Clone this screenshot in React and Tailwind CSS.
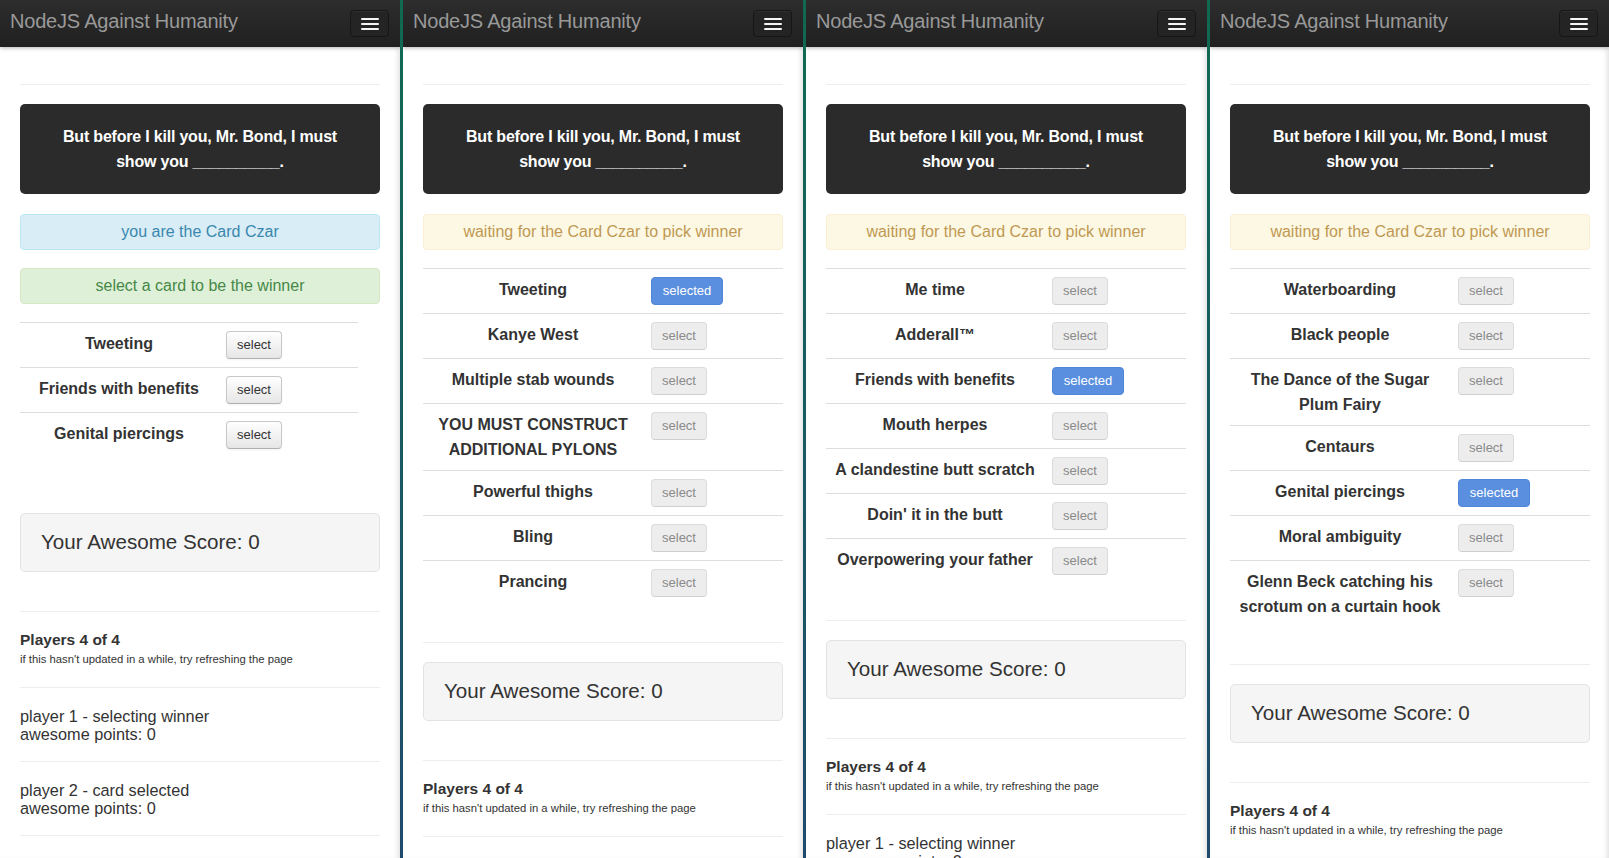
import React from 'react';

const BLACK_CARD = 'But before I kill you, Mr. Bond, I must show you __________.';

const players = [
  { name: 'player 1', status: 'selecting winner', points: 0 },
  { name: 'player 2', status: 'card selected', points: 0 },
  { name: 'player 3', status: 'card selected', points: 0 },
  { name: 'player 4', status: 'card selected', points: 0 },
];

const panels = [
  {
    width: 'w-[400px]',
    czar: true,
    tableClass: 'w-[338px] grid-cols-[198px_1fr]',
    cards: [
      { text: 'Tweeting' },
      { text: 'Friends with benefits' },
      { text: 'Genital piercings' },
    ],
  },
  {
    width: 'w-[400px]',
    czar: false,
    tableClass: 'w-[360px] grid-cols-[220px_1fr]',
    cards: [
      { text: 'Tweeting', selected: true },
      { text: 'Kanye West' },
      { text: 'Multiple stab wounds' },
      { text: 'YOU MUST CONSTRUCT ADDITIONAL PYLONS' },
      { text: 'Powerful thighs' },
      { text: 'Bling' },
      { text: 'Prancing' },
    ],
  },
  {
    width: 'w-[401px]',
    czar: false,
    tableClass: 'w-[360px] grid-cols-[218px_1fr]',
    cards: [
      { text: 'Me time' },
      { text: 'Adderall™' },
      { text: 'Friends with benefits', selected: true },
      { text: 'Mouth herpes' },
      { text: 'A clandestine butt scratch' },
      { text: "Doin' it in the butt" },
      { text: 'Overpowering your father' },
    ],
  },
  {
    width: 'flex-1',
    czar: false,
    tableClass: 'w-[360px] grid-cols-[220px_1fr]',
    cards: [
      { text: 'Waterboarding' },
      { text: 'Black people' },
      { text: 'The Dance of the Sugar Plum Fairy' },
      { text: 'Centaurs' },
      { text: 'Genital piercings', selected: true },
      { text: 'Moral ambiguity' },
      { text: 'Glenn Beck catching his scrotum on a curtain hook' },
    ],
  },
];

function Navbar() {
  return (
    <div className="relative z-10 flex h-[47px] items-center justify-between bg-gradient-to-b from-[#2d2d2d] to-[#202020] shadow-[0_1px_4px_rgba(0,0,0,0.3)]">
      <span className="mb-[6px] pl-[10px] text-[20px] leading-[24px] text-[#999999] tracking-[-0.2px]">
        NodeJS Against Humanity
      </span>
      <button className="mr-[11px] flex h-[27px] w-[39px] flex-col items-center justify-center gap-[3px] rounded-[4px] border border-[#161616] bg-[#242424] shadow-[inset_0_1px_0_rgba(255,255,255,0.06)]">
        <span className="block h-[2px] w-[18px] rounded-[1px] bg-[#f5f5f5]" />
        <span className="block h-[2px] w-[18px] rounded-[1px] bg-[#f5f5f5]" />
        <span className="block h-[2px] w-[18px] rounded-[1px] bg-[#f5f5f5]" />
      </button>
    </div>
  );
}

function SelectButton({ czar, selected }) {
  if (selected) {
    return (
      <button className="h-[28px] w-[72px] rounded-[4px] border border-[#5086d8] bg-[#5a8fdf] text-[13px] text-white">
        selected
      </button>
    );
  }
  if (czar) {
    return (
      <button className="h-[28px] w-[56px] rounded-[4px] border border-[#c8c8c8] border-b-[#b0b0b0] bg-gradient-to-b from-white to-[#e6e6e6] text-[13px] text-[#333333] shadow-[inset_0_1px_0_rgba(255,255,255,0.2),0_1px_2px_rgba(0,0,0,0.05)]">
        select
      </button>
    );
  }
  return (
    <button className="h-[28px] w-[56px] rounded-[4px] border border-[#dcdcdc] border-b-[#cfcfcf] bg-[#ededed] text-[13px] text-[#8a8a8a]">
      select
    </button>
  );
}

function Alert({ tone, children }) {
  const tones = {
    info: 'bg-[#d9edf7] border-[#bce8f1] text-[#3a87ad]',
    success: 'bg-[#dff0d8] border-[#d6e9c6] text-[#468847]',
    warning: 'bg-[#fcf8e3] border-[#fbeed5] text-[#c09853]',
  };
  return (
    <div className={`mt-5 h-[36px] rounded-[4px] border text-center text-[16px] leading-[34px] ${tones[tone]}`}>
      {children}
    </div>
  );
}

function Panel({ panel }) {
  return (
    <div className={`${panel.width} h-full shrink-0 overflow-hidden bg-white shadow-[inset_-5px_0_5px_-3px_rgba(0,0,0,0.12)]`}>
      <Navbar />
      <div className="ml-5 w-[360px] pt-[37px] text-[#333333]">
        <div className="h-px bg-[#eeeeee]" />

        {/* black card */}
        <div className="mt-[19px] h-[90px] rounded-[5px] bg-[#2b2b2b] px-8 py-5 text-center text-[16px] font-bold leading-[25px] tracking-[-0.2px] text-white">
          {BLACK_CARD}
        </div>

        {panel.czar ? (
          <>
            <Alert tone="info">you are the Card Czar</Alert>
            <div className="-mt-[2px]">
              <Alert tone="success">select a card to be the winner</Alert>
            </div>
          </>
        ) : (
          <Alert tone="warning">waiting for the Card Czar to pick winner</Alert>
        )}

        {/* white cards */}
        <div className={`mt-[18px] grid ${panel.tableClass}`}>
          {panel.cards.map((card, i) => (
            <React.Fragment key={i}>
              <div className="border-t border-[#dddddd] px-1 py-2 text-center text-[16px] font-bold leading-[25px]">
                {card.text}
              </div>
              <div className="border-t border-[#dddddd] py-2 pl-2">
                <SelectButton czar={panel.czar} selected={card.selected} />
              </div>
            </React.Fragment>
          ))}
        </div>

        {panel.czar ? (
          <div className="mt-[56px]" />
        ) : (
          <>
            <div className="mt-[37px] h-px bg-[#eeeeee]" />
            <div className="mt-[19px]" />
          </>
        )}

        {/* score */}
        <div className="flex h-[59px] items-center rounded-[5px] border border-[#e3e3e3] bg-[#f5f5f5] pl-5 text-[20.6px]">
          Your Awesome Score: 0
        </div>

        <div className="mt-[39px] h-px bg-[#eeeeee]" />
        <div className="pt-[18px] pb-[19px]">
          <div className="text-[15.5px] font-bold leading-[20px]">Players 4 of 4</div>
          <div className="text-[11.3px] leading-[18px]">if this hasn't updated in a while, try refreshing the page</div>
        </div>
        <div className="h-px bg-[#eeeeee]" />
        {players.map((p) => (
          <div key={p.name}>
            <div className="pt-[19px] pb-[18px] text-[16.3px] leading-[18px]">
              <div>
                {p.name} - {p.status}
              </div>
              <div>awesome points: {p.points}</div>
            </div>
            <div className="h-px bg-[#eeeeee]" />
          </div>
        ))}
      </div>
    </div>
  );
}

function Separator() {
  return <div className="h-full w-[3px] shrink-0 bg-gradient-to-b from-[#0f6a50] via-[#185a62] to-[#1f4a6c]" />;
}

export default function App() {
  return (
    <div className="flex h-[858px] w-[1609px] overflow-hidden font-['Liberation_Sans',Arial,sans-serif]">
      {panels.map((panel, i) => (
        <React.Fragment key={i}>
          {i > 0 && <Separator />}
          <Panel panel={panel} />
        </React.Fragment>
      ))}
    </div>
  );
}
